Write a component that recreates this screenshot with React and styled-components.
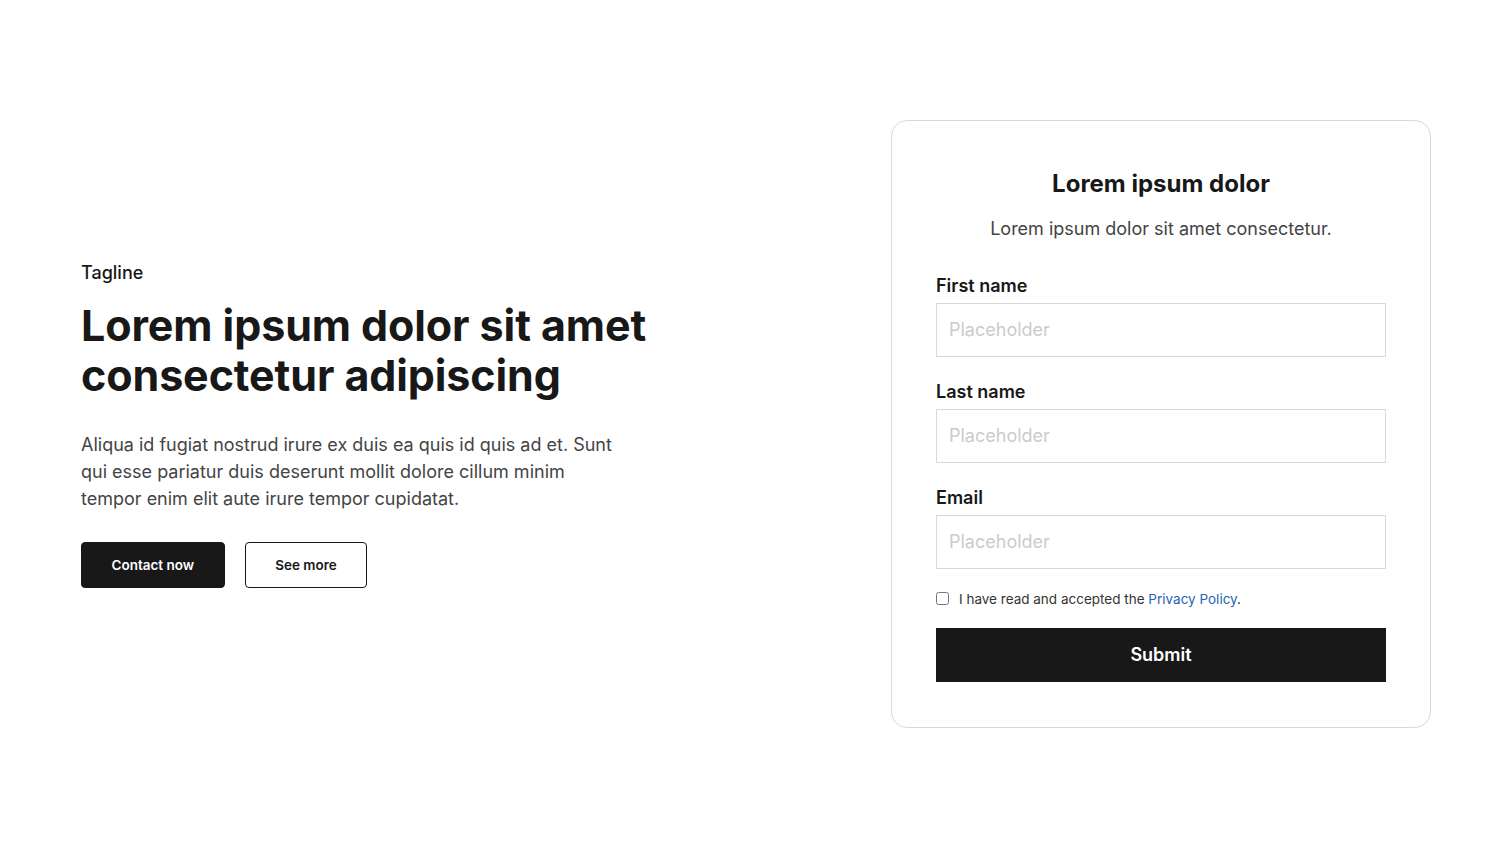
import React from "react";
import styled, { createGlobalStyle } from "styled-components";

const Global = createGlobalStyle`
  * { box-sizing: border-box; }
  html, body { margin: 0; padding: 0; background: #fff; }
  body { font-family: Inter, "Noto Sans", sans-serif; color: #181818; }
`;

const Page = styled.main`
  height: 847px;
  display: flex;
  align-items: center;
  justify-content: space-between;
  padding: 0 81px;
`;

const Hero = styled.section`
  display: flex;
  flex-direction: column;
  width: 600px;
  padding-top: 2px;
`;

const Tagline = styled.div`
  font-size: 18px;
  font-weight: 500;
  line-height: 22px;
  color: #181818;
`;

const Heading = styled.h1`
  margin: 16px 0 0;
  font-size: 43px;
  font-weight: 700;
  line-height: 50px;
  letter-spacing: -0.1px;
  color: #181818;
`;

const Lead = styled.p`
  margin: 31px 0 0;
  max-width: 540px;
  font-size: 18px;
  line-height: 27px;
  color: #444;
`;

const Actions = styled.div`
  display: flex;
  gap: 20px;
  margin-top: 30px;
`;

const Button = styled.button`
  height: 46px;
  padding: 0 29.5px;
  border-radius: 4px;
  border: 1px solid #181818;
  background: ${(p) => (p.$primary ? "#181818" : "#fff")};
  color: ${(p) => (p.$primary ? "#fff" : "#181818")};
  font-family: Inter, sans-serif;
  font-size: 13.5px;
  font-weight: 600;
  cursor: pointer;
`;

const Card = styled.form`
  width: 540px;
  border: 1px solid #d9d9d9;
  border-radius: 16px;
  padding: 48px 44px 45px;
  display: flex;
  flex-direction: column;
`;

const CardTitle = styled.h2`
  margin: 0;
  text-align: center;
  font-size: 24px;
  font-weight: 700;
  line-height: 30px;
  color: #181818;
`;

const CardSub = styled.p`
  margin: 16px 0 0;
  text-align: center;
  font-size: 18px;
  line-height: 27px;
  color: #444;
`;

const Fields = styled.div`
  display: flex;
  flex-direction: column;
  gap: 24px;
  margin-top: 33px;
`;

const Field = styled.label`
  display: flex;
  flex-direction: column;
  gap: 6px;
`;

const Label = styled.span`
  font-size: 18px;
  font-weight: 600;
  line-height: 22px;
  color: #181818;
`;

const Input = styled.input`
  height: 54px;
  border: 1px solid #d9d9d9;
  border-radius: 0;
  padding: 0 12px;
  font-family: Inter, sans-serif;
  font-size: 18px;
  color: #181818;
  outline: none;
  &::placeholder { color: #cbcbcb; }
`;

const Consent = styled.label`
  display: flex;
  align-items: center;
  gap: 10px;
  margin-top: 20px;
  font-size: 13.5px;
  line-height: 20px;
  color: #333;
`;

const Check = styled.input`
  width: 13px;
  height: 13px;
  margin: 0;
`;

const Link = styled.a`
  color: #2563b0;
  text-decoration: none;
`;

const Submit = styled.button`
  margin-top: 19px;
  height: 54px;
  border: none;
  background: #181818;
  color: #fff;
  font-family: Inter, sans-serif;
  font-size: 18px;
  font-weight: 600;
  cursor: pointer;
`;

export default function App() {
  return (
    <>
      <Global />
      <Page>
        <Hero>
          <Tagline>Tagline</Tagline>
          <Heading>
            Lorem ipsum dolor sit amet
            <br />
            consectetur adipiscing
          </Heading>
          <Lead>
            Aliqua id fugiat nostrud irure ex duis ea quis id quis ad et. Sunt qui esse pariatur duis deserunt
            mollit dolore cillum minim tempor enim elit aute irure tempor cupidatat.
          </Lead>
          <Actions>
            <Button type="button" $primary>Contact now</Button>
            <Button type="button">See more</Button>
          </Actions>
        </Hero>
        <Card onSubmit={(e) => e.preventDefault()}>
          <CardTitle>Lorem ipsum dolor</CardTitle>
          <CardSub>Lorem ipsum dolor sit amet consectetur.</CardSub>
          <Fields>
            <Field>
              <Label>First name</Label>
              <Input placeholder="Placeholder" />
            </Field>
            <Field>
              <Label>Last name</Label>
              <Input placeholder="Placeholder" />
            </Field>
            <Field>
              <Label>Email</Label>
              <Input type="email" placeholder="Placeholder" />
            </Field>
          </Fields>
          <Consent>
            <Check type="checkbox" />
            <span>
              I have read and accepted the <Link href="#">Privacy Policy</Link>.
            </span>
          </Consent>
          <Submit type="submit">Submit</Submit>
        </Card>
      </Page>
    </>
  );
}
